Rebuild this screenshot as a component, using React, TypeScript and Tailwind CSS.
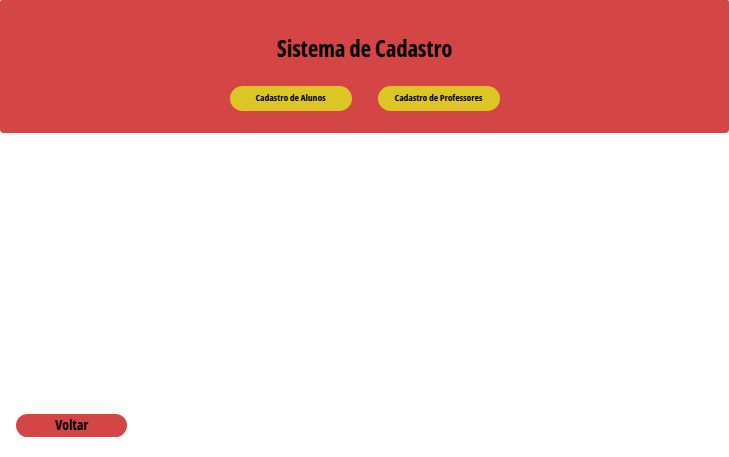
import React from 'react';

const font = "font-['Open_Sans',sans-serif] [font-stretch:75%]";

const NavButton: React.FC<{ label: string }> = ({ label }) => (
  <button className={`w-[122px] h-[25px] rounded-full bg-[#dcc626] text-black text-[9.5px] font-bold ${font}`}>
    {label}
  </button>
);

const App: React.FC = () => {
  return (
    <div className={`w-[729px] h-[457px] bg-white flex flex-col ${font}`}>
      <header className="h-[133px] bg-[#d44646] rounded-b-[4px] rounded-t-[2px] flex flex-col items-center pt-[35px]">
        <h1 className="text-[22.5px] leading-[28px] font-bold text-black">Sistema de Cadastro</h1>
        <div className="flex gap-[26px] mt-[23px]">
          <NavButton label="Cadastro de Alunos" />
          <NavButton label="Cadastro de Professores" />
        </div>
      </header>

      <main className="flex-1" />

      <div className="px-4 pb-[20px]">
        <button className="w-[111px] h-[23px] rounded-full bg-[#d44646] text-black text-[14px] leading-[20px] font-bold pb-[1px]">
          Voltar
        </button>
      </div>
    </div>
  );
};

export default App;
